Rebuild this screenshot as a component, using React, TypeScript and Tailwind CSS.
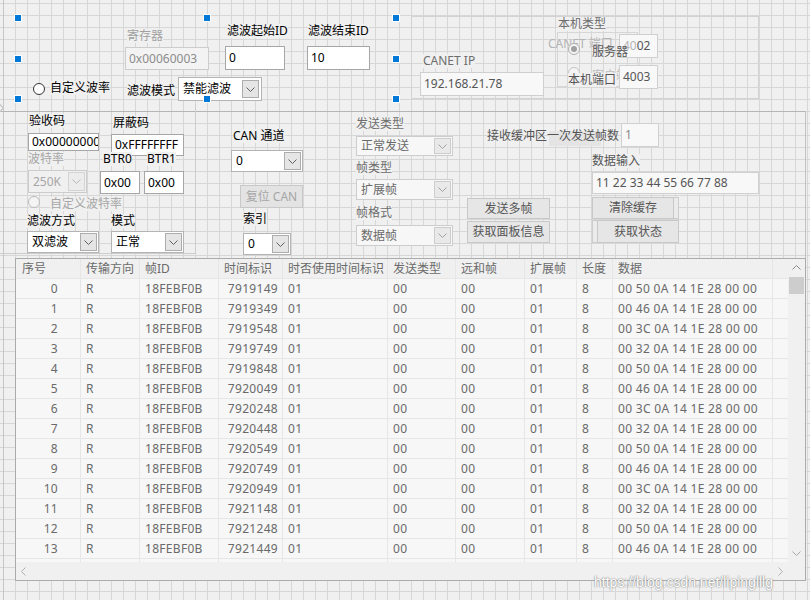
import React from "react";

const FONT = "font-['Noto_Sans','Noto_Sans_CJK_SC',sans-serif]";

function Chev({ color = "#606060", dir = "down" }: { color?: string; dir?: "down" | "up" | "left" | "right" }) {
  const d =
    dir === "down"
      ? "M0.5 0.5 L4.5 4.5 L8.5 0.5"
      : dir === "up"
      ? "M0.5 4.5 L4.5 0.5 L8.5 4.5"
      : dir === "left"
      ? "M4.5 0.5 L0.5 4.5 L4.5 8.5"
      : "M0.5 0.5 L4.5 4.5 L0.5 8.5";
  const vert = dir === "down" || dir === "up";
  return (
    <svg width={vert ? 9 : 5} height={vert ? 5 : 9} viewBox={vert ? "0 0 9 5" : "0 0 5 9"}>
      <path d={d} stroke={color} strokeWidth="1" fill="none" />
    </svg>
  );
}

function Lbl({ c, children }: { c: string; children: React.ReactNode }) {
  return <div className={"absolute whitespace-nowrap text-[12px] leading-[14px] " + c}>{children}</div>;
}

function Tb({ c, children }: { c: string; children: React.ReactNode }) {
  return (
    <div className={"absolute flex items-center overflow-hidden whitespace-nowrap border pl-[3px] text-[12px] leading-[14px] " + c}>
      {children}
    </div>
  );
}

function Combo({ c, btn, chev, children }: { c: string; btn: string; chev?: string; children: React.ReactNode }) {
  return (
    <div className={"absolute flex items-stretch border p-[1px] text-[12px] leading-[14px] " + c}>
      <div className="flex flex-1 items-center overflow-hidden whitespace-nowrap pl-[3px]">{children}</div>
      <div className={"flex w-[17px] items-center justify-center border " + btn}>
        <Chev color={chev} />
      </div>
    </div>
  );
}

function Btn({ c, children }: { c: string; children?: React.ReactNode }) {
  return (
    <div className={"absolute flex items-center justify-center whitespace-nowrap border text-[12px] leading-[14px] " + c}>
      {children}
    </div>
  );
}

function Radio({ c, dot }: { c: string; dot?: boolean }) {
  return (
    <div className={"absolute flex h-[12px] w-[12px] items-center justify-center rounded-full border " + c}>
      {dot && <div className="h-[6px] w-[6px] rounded-full bg-[#a0a0a0]" />}
    </div>
  );
}

function Handle({ c }: { c: string }) {
  return (
    <div className={"absolute flex h-[8px] w-[8px] items-center justify-center bg-white " + c}>
      <div className="h-[6px] w-[6px] bg-[#0078d7]" />
    </div>
  );
}

const times = [
  "7919149", "7919349", "7919548", "7919749", "7919848", "7920049", "7920248",
  "7920448", "7920549", "7920749", "7920949", "7921148", "7921248", "7921449",
];
const b2 = ["50", "46", "3C", "32"];

const headers = ["序号", "传输方向", "帧ID", "时间标识", "时否使用时间标识", "发送类型", "远和帧", "扩展帧", "长度", "数据", ""];
const colCls = [
  "w-[65px]",
  "w-[59px]",
  "w-[79px]",
  "w-[64px]",
  "w-[105px]",
  "w-[68px]",
  "w-[69px]",
  "w-[52px]",
  "w-[36px]",
  "w-[160px]",
  "w-[15px]",
];

function Row({ cells, header }: { cells: string[]; header?: boolean }) {
  return (
    <div className={"flex h-[20px] shrink-0 " + (header ? "bg-[#f0f0f0]" : "bg-[#f7f7f7] tracking-[0.3px]")}>
      {cells.map((t, i) => {
        let align = "justify-start pl-[5px]";
        if (!header && i === 0) align = "justify-end pr-[22px]";
        if (!header && i === 3) align = "justify-end pr-[4px]";
        if (header && i === 0) align = "justify-start pl-[6px]";
        return (
          <div
            key={i}
            className={
              "flex h-[20px] shrink-0 items-center overflow-hidden whitespace-nowrap border-r border-b border-[#e6e6e6] " +
              colCls[i] +
              " " +
              align +
              (i === 10 ? " border-r-0" : "")
            }
          >
            {t}
          </div>
        );
      })}
    </div>
  );
}

function Table() {
  const rows = times.map((t, i) => [
    String(i),
    "R",
    "18FEBF0B",
    t,
    "01",
    "00",
    "00",
    "01",
    "8",
    `00 ${b2[i % 4]} 0A 14 1E 28 00 00`,
    "",
  ]);
  return (
    <div className="absolute left-[15px] top-[258px] flex h-[323px] w-[791px] flex-col border border-[#ababab] bg-[#f7f7f7] text-[12px] leading-[14px] text-[#6a6a6a]">
      <div className="flex h-[303px]">
        <div className="flex h-[303px] w-[772px] flex-col overflow-hidden">
          <Row cells={headers} header />
          {rows.map((r, i) => (
            <Row key={i} cells={r} />
          ))}
          <Row cells={["", "", "", "", "", "", "", "", "", "", ""]} />
        </div>
        <div className="flex h-[303px] w-[17px] flex-col bg-[#f0f0f0]">
          <div className="flex h-[17px] items-center justify-center">
            <Chev color="#8a8a8a" dir="up" />
          </div>
          <div className="mx-[1px] mt-[1px] h-[17px] bg-[#cdcdcd]" />
          <div className="flex-1" />
          <div className="flex h-[17px] items-center justify-center">
            <Chev color="#a8a8a8" dir="down" />
          </div>
        </div>
      </div>
      <div className="flex h-[18px]">
        <div className="flex w-[772px] items-center justify-between bg-[#f0f0f0] px-[5px]">
          <Chev color="#b0b0b0" dir="left" />
          <Chev color="#b0b0b0" dir="right" />
        </div>
        <div className="w-[17px] bg-[#f0f0f0]" />
      </div>
    </div>
  );
}

export default function App() {
  return (
    <div
      className={
        "relative h-[600px] w-[810px] overflow-hidden bg-[#f0f0f0] [background-image:linear-gradient(to_right,#d7d7d7_1px,transparent_1px),linear-gradient(to_bottom,#d7d7d7_1px,transparent_1px)] [background-size:12px_12px] [background-position:3px_3px] " +
        FONT
      }
    >
      {/* structural lines */}
      <div className="absolute left-[3px] top-0 h-[600px] w-[1px] bg-[#c6c6c6]" />
      <div className="absolute left-0 top-[111px] h-[1px] w-[806px] bg-[#b5b5b5]" />
      <div className="absolute left-[805px] top-[111px] h-[148px] w-[1px] bg-[#c2c2c2]" />
      <div className="absolute left-[195px] top-[104px] h-[150px] w-[1px] bg-[#cdcdcd]" />
      <div className="absolute left-0 top-[253px] h-[1px] w-[196px] bg-[#cdcdcd]" />
      <div className="absolute left-[-3px] top-[105px] h-[6px] w-[6px] rotate-45 border border-[#bdbdbd] bg-[#f0f0f0]" />

      {/* top-left selected group */}
      <Lbl c="left-[127px] top-[29px] bg-[#f0f0f0] text-[#a0a0a0]">寄存器</Lbl>
      <Tb c="left-[125px] top-[47px] h-[23px] w-[84px] border-[#cccccc] bg-[#f3f3f3] text-[#8c8c8c]">0x00060003</Tb>
      <Lbl c="left-[227px] top-[24px] bg-[#f0f0f0] text-black">滤波起始ID</Lbl>
      <Tb c="left-[225px] top-[46px] h-[24px] w-[60px] border-[#a6a6a6] bg-white text-black">0</Tb>
      <Lbl c="left-[308px] top-[24px] bg-[#f0f0f0] text-black">滤波结束ID</Lbl>
      <Tb c="left-[307px] top-[46px] h-[24px] w-[63px] border-[#a6a6a6] bg-white text-black">10</Tb>
      <Radio c="left-[33px] top-[83px] border-[#333333] bg-white" />
      <Lbl c="left-[50px] top-[81px] bg-[#f0f0f0] text-black">自定义波率</Lbl>
      <Lbl c="left-[127px] top-[84px] bg-[#f0f0f0] text-black">滤波模式</Lbl>
      <Combo c="left-[178px] top-[77px] h-[24px] w-[84px] border-[#b4b4b4] bg-white text-black" btn="border-[#adadad] bg-[#e5e5e5] my-[1px] mr-[1px]">
        禁能滤波
      </Combo>

      <Handle c="left-[14px] top-[14px]" />
      <Handle c="left-[203px] top-[14px]" />
      <Handle c="left-[392px] top-[14px]" />
      <Handle c="left-[14px] top-[55px]" />
      <Handle c="left-[392px] top-[55px]" />
      <Handle c="left-[14px] top-[95px]" />
      <Handle c="left-[203px] top-[95px]" />
      <Handle c="left-[392px] top-[95px]" />

      {/* top-right CANET group */}
      <div className="absolute left-[411px] top-[16px] h-[83px] w-[348px] border border-[#d3d3d3]" />
      <Lbl c="left-[423px] top-[54px] bg-[#f0f0f0] text-[#6d6d6d]">CANET IP</Lbl>
      <Tb c="left-[420px] top-[72px] h-[24px] w-[124px] border-[#cfcfcf] bg-[#f8f8f8] text-[#555555]">192.168.21.78</Tb>

      <div className="absolute left-[557px] top-[32px] h-[55px] w-[81px] border border-[#d6d6d6]" />
      <Lbl c="left-[558px] top-[17px] bg-[#f0f0f0] text-[#6d6d6d]">本机类型</Lbl>
      <Lbl c="left-[548px] top-[37px] text-[#b4b4b4]">CANET 端口</Lbl>
      <Tb c="left-[619px] top-[34px] h-[24px] w-[39px] border-[#d0d0d0] bg-[#f8f8f8] text-[#555555]">
        <span className="text-[#b5b5b5]">40</span>
        <span>02</span>
      </Tb>
      <Radio c="left-[568px] top-[43px] border-[#b0b0b0] bg-[#f4f4f4]" dot />
      <Lbl c="left-[592px] top-[45px] text-[#5a5a5a]">服务器</Lbl>
      <Radio c="left-[568px] top-[67px] border-[#c4c4c4] bg-[#f4f4f4]" />
      <Lbl c="left-[592px] top-[69px] text-[#bdbdbd]">客户端</Lbl>
      <Lbl c="left-[568px] top-[73px] bg-[#f0f0f0] text-[#555555]">本机端口</Lbl>
      <Tb c="left-[619px] top-[65px] h-[24px] w-[39px] border-[#d0d0d0] bg-[#f8f8f8] text-[#555555]">4003</Tb>

      {/* left middle group */}
      <Lbl c="left-[29px] top-[114px] bg-[#f0f0f0] text-black">验收码</Lbl>
      <Tb c="left-[28px] top-[133px] h-[18px] w-[71px] border-[#a6a6a6] bg-white text-black">0x00000000</Tb>
      <Lbl c="left-[113px] top-[116px] bg-[#f0f0f0] text-black">屏蔽码</Lbl>
      <Tb c="left-[111px] top-[134px] h-[22px] w-[73px] border-[#a6a6a6] bg-white text-black">0xFFFFFFFF</Tb>
      <Lbl c="left-[28px] top-[152px] bg-[#f0f0f0] text-[#a6a6a6]">波特率</Lbl>
      <Lbl c="left-[103px] top-[152px] bg-[#f0f0f0] text-black">BTR0</Lbl>
      <Lbl c="left-[147px] top-[152px] bg-[#f0f0f0] text-black">BTR1</Lbl>
      <Combo c="left-[28px] top-[170px] h-[23px] w-[59px] border-[#cccccc] bg-[#f0f0f0] text-[#a6a6a6]" btn="border-[#d4d4d4] bg-[#ececec]" chev="#b8b8b8">
        250K
      </Combo>
      <Tb c="left-[100px] top-[171px] h-[23px] w-[40px] border-[#a6a6a6] bg-white text-black">0x00</Tb>
      <Tb c="left-[144px] top-[171px] h-[23px] w-[40px] border-[#a6a6a6] bg-white text-black">0x00</Tb>
      <Radio c="left-[28px] top-[196px] border-[#bcbcbc] bg-[#f4f4f4]" />
      <Lbl c="left-[50px] top-[197px] bg-[#f0f0f0] text-[#a6a6a6]">自定义波特率</Lbl>
      <Lbl c="left-[27px] top-[214px] bg-[#f0f0f0] text-black">滤波方式</Lbl>
      <Lbl c="left-[111px] top-[214px] bg-[#f0f0f0] text-black">模式</Lbl>
      <Combo c="left-[27px] top-[231px] h-[22px] w-[72px] border-[#b4b4b4] bg-white text-black" btn="border-[#adadad] bg-[#e5e5e5]">
        双滤波
      </Combo>
      <Combo c="left-[111px] top-[231px] h-[22px] w-[73px] border-[#b4b4b4] bg-white text-black" btn="border-[#adadad] bg-[#e5e5e5]">
        正常
      </Combo>

      {/* CAN channel */}
      <Lbl c="left-[233px] top-[129px] bg-[#f0f0f0] text-black">CAN 通道</Lbl>
      <Combo c="left-[231px] top-[150px] h-[22px] w-[72px] border-[#b4b4b4] bg-white text-black" btn="border-[#adadad] bg-[#e5e5e5]">
        0
      </Combo>
      <Btn c="left-[240px] top-[185px] h-[23px] w-[63px] border-[#c8c8c8] bg-[#e3e3e3] text-[#a6a6a6]">复位 CAN</Btn>
      <Lbl c="left-[243px] top-[212px] bg-[#f0f0f0] text-black">索引</Lbl>
      <Combo c="left-[243px] top-[233px] h-[22px] w-[48px] border-[#b4b4b4] bg-white text-black" btn="border-[#adadad] bg-[#e5e5e5]">
        0
      </Combo>

      {/* send settings */}
      <Lbl c="left-[356px] top-[117px] bg-[#f0f0f0] text-[#6d6d6d]">发送类型</Lbl>
      <Combo c="left-[356px] top-[136px] h-[20px] w-[97px] border-[#cdcdcd] bg-[#f7f7f7] text-[#6a6a6a]" btn="border-[#cdcdcd] bg-[#e9e9e9]" chev="#a0a0a0">
        正常发送
      </Combo>
      <Lbl c="left-[356px] top-[161px] bg-[#f0f0f0] text-[#6d6d6d]">帧类型</Lbl>
      <Combo c="left-[356px] top-[179px] h-[21px] w-[97px] border-[#cdcdcd] bg-[#f7f7f7] text-[#6a6a6a]" btn="border-[#cdcdcd] bg-[#e9e9e9]" chev="#a0a0a0">
        扩展帧
      </Combo>
      <Lbl c="left-[356px] top-[206px] bg-[#f0f0f0] text-[#6d6d6d]">帧格式</Lbl>
      <Combo c="left-[356px] top-[225px] h-[21px] w-[97px] border-[#cdcdcd] bg-[#f7f7f7] text-[#6a6a6a]" btn="border-[#cdcdcd] bg-[#e9e9e9]" chev="#a0a0a0">
        数据帧
      </Combo>

      <Btn c="left-[467px] top-[198px] h-[21px] w-[83px] border-[#c8c8c8] bg-[#e6e6e6] text-[#555555]">发送多帧</Btn>
      <Btn c="left-[467px] top-[221px] h-[22px] w-[83px] border-[#c8c8c8] bg-[#e6e6e6] text-[#555555]">获取面板信息</Btn>

      <div className="absolute left-[549px] top-[131px] h-[15px] w-[52px] bg-[#e4e4e4]" />
      <Lbl c="left-[487px] top-[129px] text-[#555555]">接收缓冲区一次发送帧数</Lbl>
      <Tb c="left-[621px] top-[123px] h-[24px] w-[38px] border-[#d0d0d0] bg-[#f8f8f8] text-[#8a8a8a]">1</Tb>
      <Lbl c="left-[592px] top-[154px] bg-[#f0f0f0] text-[#555555]">数据输入</Lbl>
      <Tb c="left-[592px] top-[172px] h-[22px] w-[167px] border-[#d0d0d0] bg-[#f8f8f8] text-[#555555]">11 22 33 44 55 66 77 88</Tb>

      <Btn c="left-[592px] top-[197px] h-[22px] w-[87px] border-[#cdcdcd] bg-[#ebebeb]" />
      <Btn c="left-[592px] top-[197px] h-[22px] w-[82px] border-[#c8c8c8] bg-[#e6e6e6] text-[#555555]">清除缓存</Btn>
      <Btn c="left-[592px] top-[220px] h-[23px] w-[87px] border-[#cdcdcd] bg-[#ebebeb]" />
      <Btn c="left-[597px] top-[220px] h-[23px] w-[82px] border-[#c8c8c8] bg-[#e6e6e6] text-[#555555]">获取状态</Btn>

      <Table />

      <div className="absolute left-[594px] top-[574px] whitespace-nowrap font-['Liberation_Sans',sans-serif] text-[14px] leading-[16px] text-white [text-shadow:0_0_1px_#7a7a7a,0_0_2px_#9a9a9a]">
        https://blog.csdn.net/lipinglllg
      </div>
    </div>
  );
}
